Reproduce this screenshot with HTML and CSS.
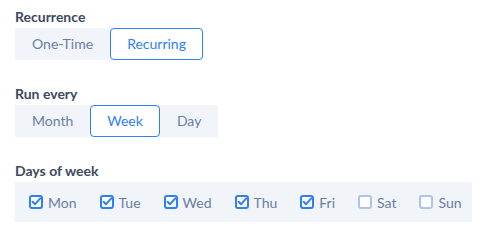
FILE: index.html
```html
<!DOCTYPE html>
<html>
<head>
<meta charset="utf-8">
<link rel="stylesheet" href="styles.css">
</head>
<body>
  <div class="section">
    <div class="label">Recurrence</div>
    <div class="segmented">
      <div class="seg">One-Time</div>
      <div class="seg active">Recurring</div>
    </div>
  </div>
  <div class="section">
    <div class="label">Run every</div>
    <div class="segmented">
      <div class="seg">Month</div>
      <div class="seg active">Week</div>
      <div class="seg">Day</div>
    </div>
  </div>
  <div class="section">
    <div class="label">Days of week</div>
    <div class="days">
      <label class="day"><svg class="cb" viewBox="0 0 14 14"><rect x="1" y="1" width="12" height="12" rx="2" class="box on"/><path d="M3.6 6.8 L6 9.3 L11.2 3.4" class="tick"/></svg>Mon</label>
      <label class="day"><svg class="cb" viewBox="0 0 14 14"><rect x="1" y="1" width="12" height="12" rx="2" class="box on"/><path d="M3.6 6.8 L6 9.3 L11.2 3.4" class="tick"/></svg>Tue</label>
      <label class="day"><svg class="cb" viewBox="0 0 14 14"><rect x="1" y="1" width="12" height="12" rx="2" class="box on"/><path d="M3.6 6.8 L6 9.3 L11.2 3.4" class="tick"/></svg>Wed</label>
      <label class="day"><svg class="cb" viewBox="0 0 14 14"><rect x="1" y="1" width="12" height="12" rx="2" class="box on"/><path d="M3.6 6.8 L6 9.3 L11.2 3.4" class="tick"/></svg>Thu</label>
      <label class="day"><svg class="cb" viewBox="0 0 14 14"><rect x="1" y="1" width="12" height="12" rx="2" class="box on"/><path d="M3.6 6.8 L6 9.3 L11.2 3.4" class="tick"/></svg>Fri</label>
      <label class="day"><svg class="cb" viewBox="0 0 14 14"><rect x="1" y="1" width="12" height="12" rx="2" class="box off"/></svg>Sat</label>
      <label class="day"><svg class="cb" viewBox="0 0 14 14"><rect x="1" y="1" width="12" height="12" rx="2" class="box off"/></svg>Sun</label>
    </div>
  </div>
</body>
</html>
```

FILE: styles.css
```css
* { box-sizing: border-box; }
body {
  margin: 0;
  padding: 8px 15px 0;
  background: #ffffff;
  font-family: Lato, "Open Sans", sans-serif;
  font-size: 14px;
}
.section {
  margin-bottom: 25px;
}
.section:last-child {
  margin-bottom: 0;
}
.label {
  font-weight: 700;
  color: #3d4a5e;
  line-height: 17px;
  margin-bottom: 3px;
}
.segmented {
  display: inline-flex;
  background: #f1f4f9;
  height: 32px;
}
.seg {
  display: flex;
  align-items: center;
  padding: 0 16px;
  border: 1px solid transparent;
  border-radius: 4px;
  color: #6a7ea3;
  line-height: 1;
}
.seg.active {
  background: #ffffff;
  border-color: #2f80f6;
  color: #2f80f6;
}
.days {
  display: inline-flex;
  align-items: center;
  gap: 23px;
  height: 40px;
  padding: 0 10px 0 14px;
  background: #f1f4f9;
}
.day {
  display: flex;
  align-items: center;
  gap: 5px;
  color: #6a7ea3;
}
.cb {
  width: 14px;
  height: 14px;
  display: block;
}
.box {
  stroke-width: 2;
}
.box.on {
  fill: #ffffff;
  stroke: #2f80f6;
}
.box.off {
  fill: #ffffff;
  stroke: #aec3e6;
}
.tick {
  fill: none;
  stroke: #2f80f6;
  stroke-width: 2;
  stroke-linecap: round;
  stroke-linejoin: round;
}
```
